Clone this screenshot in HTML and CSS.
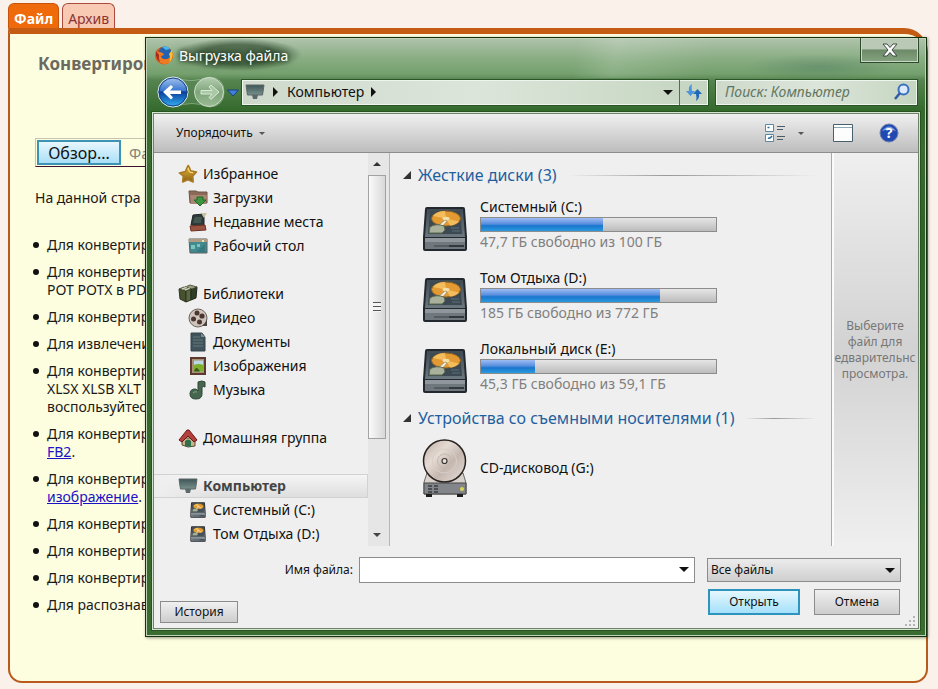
FILE: index.html
```html
<!DOCTYPE html>
<html lang="ru">
<head>
<meta charset="utf-8">
<title>Выгрузка файла</title>
<link rel="stylesheet" href="styles.css">
</head>
<body>
<svg class="sprite" aria-hidden="true">
  <defs>
    <linearGradient id="gold" x1="0" y1="0" x2="0" y2="1"><stop offset="0" stop-color="#e9b93a"/><stop offset="1" stop-color="#8a5f12"/></linearGradient>
    <linearGradient id="steel" x1="0" y1="0" x2="0" y2="1"><stop offset="0" stop-color="#3f4a52"/><stop offset="1" stop-color="#6c7880"/></linearGradient>
    <linearGradient id="screen" x1="0" y1="0" x2="0" y2="1"><stop offset="0" stop-color="#3f5656"/><stop offset="1" stop-color="#78918c"/></linearGradient>
    <linearGradient id="orb" x1="0" y1="0" x2="0" y2="1"><stop offset="0" stop-color="#a9c6ee"/><stop offset=".45" stop-color="#3a78cf"/><stop offset=".5" stop-color="#0b3f9d"/><stop offset="1" stop-color="#34b4f4"/></linearGradient>
    <linearGradient id="orb-off" x1="0" y1="0" x2="0" y2="1"><stop offset="0" stop-color="#b4cdb0"/><stop offset=".5" stop-color="#7fa57a"/><stop offset="1" stop-color="#9abb94"/></linearGradient>
    <linearGradient id="disc" x1="0" y1="0" x2="1" y2="1"><stop offset="0" stop-color="#b9aba3"/><stop offset=".35" stop-color="#e6dbd4"/><stop offset=".6" stop-color="#c4b7b0"/><stop offset="1" stop-color="#e9dfd9"/></linearGradient>
    <symbol id="i-star" viewBox="0 0 20 20"><path d="M10 1.500Q11 1.500 12.600 6.800L18.500 8 14.800 12 15.200 18 10 15.800 4.600 18 5.200 12 1.300 9 7.300 7.500z" fill="url(#gold)" stroke="#a87a26" stroke-width="1.500" stroke-linejoin="round"/><path d="M10 4 11.500 8 15 8.800" fill="none" stroke="#ffe58a"/></symbol>
    <symbol id="i-down" viewBox="0 0 20 20"><path d="M1 3h7l2 1h9v11H2z" fill="#8d6a58" stroke="#6e5446"/><path d="M2 7h17l-1 9H3z" fill="#a98672"/><path d="M9 9h6v3h3l-6 6-6-6h3z" fill="#3f9440" stroke="#1f6a2a"/></symbol>
    <symbol id="i-recent" viewBox="0 0 20 20"><path d="M5 3 16 2 16 14 3 13z" fill="#2e3a3a" stroke="#1d2525"/><path d="M7 5 14 5 13 11 5 11z" fill="#42574f"/><path d="M13 1h6l-3 5z" fill="#c9c4a2"/><path d="M2 14 17 13 18 18 3 19z" fill="#9a5340" stroke="#6d3325"/></symbol>
    <symbol id="i-desk" viewBox="0 0 20 20"><path d="M1 3h18v14H2z" fill="#438a90" stroke="#586060"/><path d="M1 3h18v3H1z" fill="#b39b83"/><path d="M3 9h4v4H3zM9 8h3v3H9z" fill="#7cc4c0"/><path d="M8 16 17 8v8z" fill="#347a80"/><path d="M14 4h2v2h-2z" fill="#d8e9c0"/></symbol>
    <symbol id="i-lib" viewBox="0 0 20 20"><path d="M1 5 8 7 8 18 2 15z" fill="#46512f" stroke="#2b331d"/><path d="M8 7 13 5 13 16 8 18z" fill="#5a6640" stroke="#2b331d"/><path d="M13 5 19 3 18 14 13 16z" fill="#333d25" stroke="#20281a"/><path d="M1 5 6 3 13 5 8 7zM7 3 12 1 19 3 14 5z" fill="#9aa082" stroke="#3a4329" stroke-width=".8"/><path d="M4 5l5-2M7 6l5-2" stroke="#d9dcc9"/></symbol>
    <symbol id="i-video" viewBox="0 0 20 20"><circle cx="10" cy="10" r="9" fill="#cdc4bb" stroke="#6b625d"/><circle cx="9" cy="5" r="2.500" fill="#4c3431"/><circle cx="5.500" cy="11" r="2.500" fill="#4c3431"/><circle cx="14" cy="8" r="2.600" fill="#4c3431"/><circle cx="11.500" cy="14" r="2.500" fill="#4c3431"/><path d="M14 18q4-3 5-7v7z" fill="#4a4240"/></symbol>
    <symbol id="i-doc" viewBox="0 0 20 20"><path d="M3 1h11l3 4v14H3z" fill="#40535a" stroke="#34464c"/><path d="M13 1v4h4z" fill="#7c908b"/><path d="M5 5h7M5 8h10M5 11h10M5 14h10" stroke="#627a78"/></symbol>
    <symbol id="i-pic" viewBox="0 0 20 20"><path d="M3 2h14v16H3z" fill="#a99075" stroke="#5d3a2d" stroke-width="2"/><path d="M6 4.500h9v11H6z" fill="#b8d7e0"/><path d="M6 9q5-2 9 0v6.500H6z" fill="#7cae2c"/><path d="M6 15.500q2-7 6 0z" fill="#3b5a1a"/></symbol>
    <symbol id="i-music" viewBox="0 0 20 20"><path d="M10 11V2q4-2 7 0v5q-2-1-3 0v7q0 5-6 5T2 14q0-5 5-5 2 0 3 2" fill="#47664f" stroke="#2e4735"/><path d="M5 13q2-2 4-1" fill="none" stroke="#86a586"/></symbol>
    <symbol id="i-home" viewBox="0 0 20 20"><path d="M4 10h13v8L10 19 4 17z" fill="#c9b48c" stroke="#594b33"/><path d="M1 12 9 2l2 0 8 10-3 2-6-6-6 6z" fill="#b4403c" stroke="#6b1a1a"/><path d="M7 18v-5q3-3 6 0v6z" fill="#2f6f4b"/></symbol>
    <symbol id="i-pc" viewBox="0 0 20 20"><path d="M1 3h18l-1.500 10h-15z" fill="url(#screen)" stroke="#5b6666"/><path d="M7 13h6l-1 4H8z" fill="#5b6a68"/></symbol>
    <symbol id="i-hdd" viewBox="0 0 46 46"><path d="M5 1h36q2 0 2 2l2 28v12q0 2-2 2H3q-2 0-2-2V31L3 3q0-2 2-2z" fill="#23282e"/><path d="M5 3h36l2 28H3z" fill="url(#steel)"/><path d="M8 5h30l2 23H6z" fill="#3c4953"/><ellipse cx="24" cy="12.500" rx="14.500" ry="7.500" fill="#e39a32" stroke="#8b6422"/><path d="M24 12.500 11 10q4-5 12-5zM24 12.500l13 3q-4 4-9 4z" fill="#f3bc5c"/><ellipse cx="24" cy="12.500" rx="3.500" ry="1.800" fill="#f3dfae"/><path d="M15 21l8-7 2 1-6 7z" fill="#f4eedc" stroke="#8b8468" stroke-width=".6"/><path d="M8 21q6-4 14-1l1 4-3 3H7z" fill="#aab19a" stroke="#5d6852"/><path d="M30 25h8M29 22h8" stroke="#4c5c67" stroke-width="2"/><path d="M3 32h40v11H3z" fill="#70787f"/><path d="M3 32h40v4H3z" fill="#8f969c"/><path d="M12 40h30" stroke="#555c62" stroke-width="2"/><path d="M27 40h15" stroke="#32383d" stroke-width="2"/></symbol>
    <symbol id="i-cd" viewBox="0 0 46 58"><path d="M5 34h36l3 10v11H2V43z" fill="#d9d2cc" stroke="#6c6764"/><path d="M2 44h42v11H2z" fill="#82868a" stroke="#444"/><circle cx="22.500" cy="22" r="21" fill="url(#disc)" stroke="#27211f" stroke-width="1.500"/><circle cx="22.500" cy="22" r="12" fill="none" stroke="#d9cec8"/><circle cx="22.500" cy="22" r="7" fill="none" stroke="#c4b8b1"/><circle cx="22.500" cy="22" r="2.500" fill="#e8e0da" stroke="#3d3735" stroke-width="1.200"/><path d="M6 47h4M6 50h4M6 53h4M12 47h4M12 50h4M12 53h4" stroke="#3a3d40" stroke-width="1.500"/><circle cx="40" cy="50" r="2" fill="#d8d94e"/><path d="M4 55h6v3H4zM35 55h6v3h-6z" fill="#1c1c1c"/></symbol>
  </defs>
</svg>

<nav class="tabs">
  <a class="tab tab-active" href="#file">Файл</a>
  <a class="tab" href="#archive">Архив</a>
</nav>
<main class="page">
  <h1>Конвертиров</h1>
  <div class="upload"><button class="browse" type="button">Обзор...</button><span>Фа</span></div>
  <p>На данной стра</p>
  <ul class="tips">
    <li>Для конвертир</li>
    <li>Для конвертир<br>POT POTX в PD</li>
    <li>Для конвертир</li>
    <li>Для извлечени</li>
    <li>Для конвертир<br>XLSX XLSB XLT<br>воспользуйтес</li>
    <li>Для конвертир<br><a href="#fb2">FB2</a>.</li>
    <li>Для конвертир<br><a href="#image">изображение</a>.</li>
    <li>Для конвертир</li>
    <li>Для конвертир</li>
    <li>Для конвертир</li>
    <li>Для распознав</li>
  </ul>
</main>

<section class="dialog" role="dialog" aria-labelledby="dialog-title">
  <header class="titlebar">
    <svg class="fox" viewBox="0 0 20 20"><circle cx="10" cy="10.500" r="9" fill="#d9541c"/><circle cx="11" cy="8" r="6.500" fill="#2462b0"/><path d="M8 2q5-2 8 2l-4 1z" fill="#49b7e8"/><path d="M2 4Q0 12 4 16q5 5 11 2 5-4 4-11-2 6-6 7-5 1-6-3l3-1q-1-3-5-3-3 0-3-3z" fill="#ee7a22"/><path d="M18 5q2 8-3 13 2-5 0-9z" fill="#f7c33c"/><path d="M2 6Q1 14 6 17q-2-4-1-7z" fill="#a62a20"/></svg>
    <h2 id="dialog-title">Выгрузка файла</h2>
    <button class="close" type="button" aria-label="Закрыть"><svg viewBox="0 0 18 14"><path d="M2 1h4l3 3.500L12 1h4l-5 6 5 6h-4L9 9.500 6 13H2l5-6z" fill="#fff" stroke="#3f4a44"/></svg></button>
  </header>

  <div class="navbar">
    <svg class="orbs" viewBox="0 0 84 34">
      <path d="M17 2q12 4 20 3.500T54 2q14 1 14 15T54 32q-10-3.500-18-3.500T17 32Q2 30 2 17T17 2z" fill="#5c8a58" opacity=".6" stroke="#a9c6a5"/>
      <circle cx="17" cy="17" r="15" fill="url(#orb)" stroke="#dbe8ee"/><circle cx="17" cy="17" r="14" fill="none" stroke="#174083"/>
      <path d="M7 17l8-7 2 2-3 3.500h11v3.500H14l3 3.500-2 2z" fill="#fff"/>
      <circle cx="53" cy="17" r="14.500" fill="url(#orb-off)" stroke="#cddccb"/>
      <path d="M63 17l-8-7-2 2 3 3.500H45v3.500h11l-3 3.500 2 2z" fill="#a9c8a4" stroke="#dbe8d8"/>
      <path d="M71.500 15h11l-5.500 6z" fill="#3f82dd" stroke="#1c4180"/>
    </svg>
    <div class="address">
      <svg class="pc"><use href="#i-pc"/></svg>
      <span class="arrow-right"></span>
      <span class="crumb">Компьютер</span>
      <span class="arrow-right"></span>
      <button class="drop" type="button" aria-label="Предыдущие расположения"><span class="arrow-down"></span></button>
      <button class="refresh" type="button" aria-label="Обновить"><svg viewBox="0 0 18 18"><path d="M7 1Q3 3 4 8H1L5.500 13 10 8H7Q6 4 7 1z" fill="#4b94dd"/><path d="M11 18q4-3 3-7h3L12.500 6 8 11h3q1 4 0 7z" fill="#2268b8"/></svg></button>
    </div>
    <label class="search"><input type="text" placeholder="Поиск: Компьютер" aria-label="Поиск"><svg viewBox="0 0 18 18"><circle cx="10.500" cy="6.500" r="5" fill="#dceafa" stroke="#3b6fc0" stroke-width="2"/><path d="M7 10 2 16" stroke="#2f5ba6" stroke-width="2.500"/></svg></label>
  </div>

  <div class="client">
    <div class="toolbar">
      <button class="organize" type="button">Упорядочить <span class="arrow-small"></span></button>
      <button class="view" type="button" aria-label="Изменить представление">
        <svg viewBox="0 0 22 20"><g fill="#fff" stroke="#5b87a3"><path d="M1.500 1.500h8v7h-8zM1.500 11.500h8v7h-8z"/></g><path d="M3.500 4.500h2M4 15q2 1 4-2" stroke="#2b6f9e" fill="none" stroke-width="1.500"/><path d="M13 3.500h8M13 6.500h6M13 13.500h8M13 16.500h6" stroke="#4b5c67"/></svg>
        <span class="arrow-small"></span>
      </button>
      <button class="pane" type="button" aria-label="Область просмотра"><svg viewBox="0 0 20 18"><path d="M.5.5h19v17H.5z" fill="#fdfdfd" stroke="#46606e"/><path d="M1 3.500h18" stroke="#8aa7b5"/></svg></button>
      <button class="help" type="button" aria-label="Справка"><svg viewBox="0 0 20 20"><circle cx="10" cy="10" r="9" fill="#2149b2" stroke="#6d7fae"/><path d="M3 8q7-9 14 0-7-3-14 0z" fill="#7d9be0"/><text x="10" y="15" text-anchor="middle">?</text></svg></button>
    </div>

    <div class="body">
      <nav class="tree">
        <ul>
          <li><svg><use href="#i-star"/></svg>Избранное</li>
          <li class="sub"><svg><use href="#i-down"/></svg>Загрузки</li>
          <li class="sub"><svg><use href="#i-recent"/></svg>Недавние места</li>
          <li class="sub"><svg><use href="#i-desk"/></svg>Рабочий стол</li>
        </ul>
        <ul>
          <li><svg><use href="#i-lib"/></svg>Библиотеки</li>
          <li class="sub"><svg><use href="#i-video"/></svg>Видео</li>
          <li class="sub"><svg><use href="#i-doc"/></svg>Документы</li>
          <li class="sub"><svg><use href="#i-pic"/></svg>Изображения</li>
          <li class="sub"><svg><use href="#i-music"/></svg>Музыка</li>
        </ul>
        <ul>
          <li><svg><use href="#i-home"/></svg>Домашняя группа</li>
        </ul>
        <ul>
          <li class="selected"><svg><use href="#i-pc"/></svg>Компьютер</li>
          <li class="sub disk"><svg><use href="#i-hdd"/></svg>Системный (C:)</li>
          <li class="sub disk"><svg><use href="#i-hdd"/></svg>Том Отдыха (D:)</li>
        </ul>
      </nav>
      <div class="scrollbar">
        <span class="scroll-end"><span class="arrow-up"></span></span>
        <span class="thumb"><span class="grip"></span></span>
        <span class="scroll-end"><span class="arrow-end"></span></span>
      </div>

      <div class="files">
        <h3><span class="fold"></span>Жесткие диски (3)</h3>
        <div class="drive"><svg><use href="#i-hdd"/></svg><div class="info"><span>Системный (C:)</span><div class="bar"><div class="fill" style="width:52%"></div></div><small>47,7 ГБ свободно из 100 ГБ</small></div></div>
        <div class="drive"><svg><use href="#i-hdd"/></svg><div class="info"><span>Том Отдыха (D:)</span><div class="bar"><div class="fill" style="width:76%"></div></div><small>185 ГБ свободно из 772 ГБ</small></div></div>
        <div class="drive"><svg><use href="#i-hdd"/></svg><div class="info"><span>Локальный диск (E:)</span><div class="bar"><div class="fill" style="width:23%"></div></div><small>45,3 ГБ свободно из 59,1 ГБ</small></div></div>
        <h3><span class="fold"></span>Устройства со съемными носителями (1)</h3>
        <div class="drive cd"><svg><use href="#i-cd"/></svg><span>CD-дисковод (G:)</span></div>
      </div>

      <aside class="preview"><p>Выберите<br>файл для<br>едварительнс<br>просмотра.</p></aside>
    </div>

    <footer class="footer">
      <div class="name-row">
        <label for="filename">Имя файла:</label>
        <div class="combo"><input id="filename" type="text"><span class="arrow-down"></span></div>
        <div class="combo filter"><select aria-label="Тип файлов"><option>Все файлы</option></select><span class="arrow-down"></span></div>
      </div>
      <div class="button-row">
        <button class="btn history" type="button">История</button>
        <button class="btn primary" type="button">Открыть</button>
        <button class="btn cancel" type="button">Отмена</button>
      </div>
      <svg class="resize" viewBox="0 0 12 12"><path d="M9 1h2v2H9zM5 5h2v2H5zM9 5h2v2H9zM1 9h2v2H1zM5 9h2v2H5zM9 9h2v2H9z" fill="#b4b4b4"/></svg>
    </footer>
  </div>
</section>
</body>
</html>
```
FILE: styles.css
```css
* { box-sizing: border-box; }

body {
  margin: 0;
  padding: 3px 10px 6px 8px;
  min-height: 100vh;
  display: flex;
  flex-direction: column;
  position: relative;
  overflow: hidden;
  background: #fbf1eb;
  color: #1a1a1a;
  font: 14px/18px "Noto Sans", "Open Sans", sans-serif;
}

button, input, select { font: inherit; color: inherit; }
button { padding: 0; border: 0; background: none; }
h1, h2, h3, p, ul { margin: 0; padding: 0; }
ul { list-style: none; }
svg { display: block; flex: none; }
.sprite { position: absolute; width: 0; height: 0; }

/* Page behind the dialog */
.tabs { display: flex; gap: 3px; }
.tab {
  height: 25px;
  padding: 6px 5px 0;
  border: 1px solid #a94a3c;
  border-bottom: 0;
  border-radius: 6px 6px 0 0;
  background: #f8c9b3;
  color: #8c3434;
  text-decoration: none;
}
.tab-active { border-color: #c9530c; background: #ee6a0a; color: #fff; font-weight: bold; }

.page {
  flex: 1;
  padding: 20px 25px;
  border: 2px solid #b85a1c;
  border-top: 6px solid #c45c14;
  border-radius: 0 24px 14px 14px;
  background: #fdfddf;
  white-space: nowrap;
}
.page h1 { margin-left: 3px; font-size: 17px; line-height: 20px; color: #6b6a60; }
.upload {
  display: flex;
  align-items: center;
  gap: 8px;
  height: 29px;
  margin: 64px 0 22px;
  padding: 1px;
  border-top: 1px solid #c5c5b0;
  border-left: 1px solid #c5c5b0;
  border-bottom: 1px solid #3c1430;
  color: #85857c;
  font-size: 15px;
}
.browse {
  width: 84px;
  height: 25px;
  border: 2px solid #3c93b4;
  background: linear-gradient(#e8f7fe, #a9dff8);
  color: #111;
  font-size: 16px;
  line-height: 20px;
}
.tips { margin-top: 29px; }
.tips li { position: relative; margin-bottom: 9px; padding-left: 12px; }
.tips li::before {
  content: "";
  position: absolute;
  left: -2px;
  top: 6px;
  width: 6px;
  height: 6px;
  border-radius: 50%;
  background: #111;
}
.tips a { color: #1a12c4; }

/* Dialog window */
.dialog {
  position: absolute;
  left: 145px;
  right: 11px;
  top: 37px;
  height: 600px;
  display: flex;
  flex-direction: column;
  padding: 0 6px 6px;
  border: 1px solid #14300f;
  box-shadow: inset 0 0 0 1px #bfd4b9, 1px 1px 3px #0006;
  background:
    linear-gradient(100deg, #fff0 55%, #ffffff26 60%, #fff0 72%) 0 0 / 100% 40px no-repeat,
    radial-gradient(closest-side, #3e6d5a55, #fff0) 95% 16px / 150px 26px no-repeat,
    linear-gradient(#b0c3ac, #8aae84 20px, #74a06d 36px, #568450 42px, #356a2d 72px, #3a6b30 110px, #2f6426 200px, #3a6b30);
  color: #111;
}
.titlebar { display: flex; align-items: flex-start; height: 37px; padding-left: 2px; }
.fox { width: 20px; height: 20px; margin-top: 7px; }
.titlebar h2 {
  margin-right: auto;
  padding: 9px 14px 6px 5px;
  background: radial-gradient(closest-side, #24402499 60%, #24402400);
  color: #fff;
  font-size: 14px;
  font-weight: normal;
  text-shadow: 0 0 4px #1b2b1b, 0 0 10px #1b2b1b;
}
.close {
  display: grid;
  place-items: center;
  width: 59px;
  height: 25px;
  margin-right: 1px;
  border: 1px solid #2d4a2a;
  border-top: 0;
  box-shadow: inset 0 0 0 1px #c8d8c4;
  background: linear-gradient(#b9c9b5 45%, #6d8a68 50%, #86a480);
}
.close svg { width: 18px; height: 14px; }

.navbar { display: flex; align-items: center; height: 34px; margin-bottom: 3px; padding-right: 2px; }
.orbs { width: 84px; height: 34px; margin: 0 1px 0 4px; }
.address, .search {
  display: flex;
  align-items: center;
  height: 27px;
  border: 1px solid #2b5526;
  box-shadow: inset 0 0 0 1px #eef5ec;
  background: linear-gradient(90deg, #ced9cb, #dce5da 50%, #c5d5c0);
}
.address { flex: 1; }
.pc { width: 20px; height: 20px; margin: 0 8px 0 3px; }
.crumb { margin: 0 7px 0 9px; }
.drop { width: 22px; height: 25px; margin-left: auto; display: grid; place-items: center; }
.refresh { width: 29px; height: 25px; border-left: 1px solid #4f7249; display: grid; place-items: center; }
.refresh svg, .search svg { width: 18px; height: 18px; }
.search { width: 203px; margin-left: 6px; padding: 0 6px 0 9px; }
.search input { flex: 1; min-width: 0; border: 0; padding: 0; background: none; outline: none; }
.search input::placeholder { color: #62765f; font-style: italic; opacity: 1; }

.arrow-right, .arrow-down, .arrow-small, .arrow-up, .arrow-end { display: block; flex: none; border: solid transparent; }
.arrow-right { border-width: 5px 0 5px 5px; border-left-color: #111; }
.arrow-down { border-width: 5px 5px 0; border-top-color: #111; }
.arrow-small { border-width: 3px 3px 0; border-top-color: #555; }
.arrow-up { border-width: 0 4px 4px; border-bottom-color: #333; }
.arrow-end { border-width: 4px 4px 0; border-top-color: #444; }

.client {
  flex: 1;
  min-height: 0;
  display: flex;
  flex-direction: column;
  border: 1px solid #d5e4d0;
  outline: 1px solid #28521f;
  box-shadow: inset 0 0 0 1px #6d8369;
  padding: 1px;
  background: #efefef;
}
.toolbar {
  display: flex;
  align-items: center;
  height: 39px;
  padding: 0 19px 0 22px;
  border-bottom: 1px solid #8d8d8d;
  background: linear-gradient(#f0f0f0, #bdbdbd);
  font-size: 12px;
}
.organize, .view { display: flex; align-items: center; gap: 6px; }
.view { gap: 12px; margin-left: auto; }
.view svg { width: 22px; height: 20px; }
.pane { margin: 0 26px 0 29px; }
.pane svg { width: 20px; height: 18px; }
.help svg { width: 20px; height: 20px; }
.help text { fill: #fff; font: bold 14px "Noto Sans", sans-serif; }

.body { flex: 1; min-height: 0; display: flex; }
.tree { width: 214px; padding-top: 9px; overflow: hidden; }
.tree ul { margin-bottom: 24px; }
.tree li { display: flex; align-items: center; gap: 5px; height: 24px; padding-left: 24px; white-space: nowrap; }
.tree .sub { padding-left: 34px; }
.tree svg { width: 20px; height: 20px; }
.tree .disk svg { width: 16px; height: 16px; margin: 2px; }
.tree .selected {
  border: 1px solid #d2d2d2;
  border-left: 0;
  background: linear-gradient(90deg, #efefef, #fff0 30%), linear-gradient(#f5f5f5, #dedede);
  color: #444;
  font-weight: bold;
}

.scrollbar { width: 21px; padding-right: 3px; display: flex; flex-direction: column; background: #e6e6e6; }
.scroll-end { display: grid; place-items: center; height: 22px; }
.thumb {
  display: grid;
  place-items: center;
  height: 264px;
  margin-bottom: auto;
  border: 1px solid #a2a2a2;
  background: linear-gradient(90deg, #fafafa, #d8d8d8);
}
.grip { width: 8px; height: 10px; background: repeating-linear-gradient(#555 0 1px, #f5f5f5 1px 4px); }

.files { flex: 1; min-width: 0; padding: 10px 14px 0 13px; border-left: 1px solid #b5b5b5; }
.files h3 {
  display: flex;
  align-items: center;
  height: 24px;
  color: #1f5f9f;
  font-size: 16px;
  font-weight: normal;
  white-space: nowrap;
}
.files h3::after {
  content: "";
  flex: 1;
  height: 1px;
  margin-left: 10px;
  background: linear-gradient(90deg, #ccc0, #999 40%, #ccc0);
}
.fold { margin-right: 7px; border: 4px solid transparent; border-right-color: #333; border-bottom-color: #333; }
.drive { display: flex; align-items: center; gap: 11px; height: 71px; padding: 0 100px 0 18px; }
.drive svg { width: 48px; height: 46px; margin-top: 8px; }
.info { flex: 1; display: flex; flex-direction: column; white-space: nowrap; }
.info small { font-size: 14px; color: #7f7f7f; line-height: 19px; }
.bar { height: 15px; margin-top: 1px; border: 1px solid #8c8c8c; background: linear-gradient(#e6e6e6, #bcbcbc); }
.fill { height: 100%; background: linear-gradient(#9dbcf2, #5a8fe0 45%, #1a76cc 60%, #2a9be0); }
.files h3 + .drive { margin-top: 2px; }
.drive + h3 { margin-top: 4px; }
.drive.cd svg { width: 48px; height: 58px; margin-top: 0; }

.preview {
  width: 87px;
  display: flex;
  align-items: center;
  justify-content: center;
  border-left: 1px solid #aaa;
  box-shadow: inset 2px 0 #fafafa;
  background: linear-gradient(#efefef, #d2d2d2 50%, #efefef);
  color: #777;
  font-size: 12px;
  line-height: 16px;
  text-align: center;
  overflow: hidden;
}

.footer { position: relative; padding: 11px 17px 5px 6px; font-size: 12px; }
.name-row { display: flex; align-items: center; }
.name-row label { flex: none; width: 193px; text-align: right; }
.combo { position: relative; flex: 1; height: 26px; margin-left: 6px; }
.combo input, .combo select {
  width: 100%;
  height: 100%;
  padding: 0 4px;
  border: 1px solid #8c8c8c;
  border-radius: 0;
  background: #fff;
  appearance: none;
}
.combo .arrow-down { position: absolute; right: 6px; top: 10px; pointer-events: none; }
.combo.filter { flex: none; width: 194px; height: 24px; margin-left: 12px; }
.filter select { padding: 0 3px; background: linear-gradient(#ececec, #cfcfcf); }
.button-row { display: flex; align-items: flex-start; margin-top: 6px; padding-right: 1px; }
.btn { width: 86px; height: 26px; border: 1px solid #8c8c8c; background: linear-gradient(#f0f0f0, #cdcdcd); }
.history { width: 78px; height: 22px; margin: 12px auto 0 0; }
.primary { width: 92px; border: 2px solid #2e93bd; background: linear-gradient(#e6f7fe, #a5e1fb); }
.cancel { margin-left: 14px; }
.resize { position: absolute; right: 2px; bottom: 1px; width: 12px; height: 12px; }
```
